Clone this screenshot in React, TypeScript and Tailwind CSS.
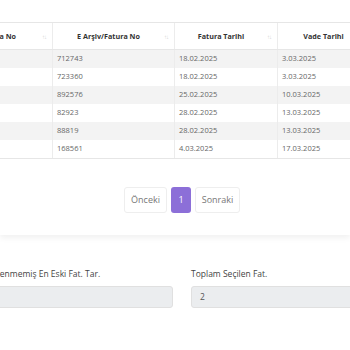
const rows = [
  ["712743", "18.02.2025", "3.03.2025"],
  ["723360", "18.02.2025", "3.03.2025"],
  ["892576", "25.02.2025", "10.03.2025"],
  ["82923", "28.02.2025", "13.03.2025"],
  ["88819", "28.02.2025", "13.03.2025"],
  ["168561", "4.03.2025", "17.03.2025"],
];

const widths = ["w-[99px]", "w-[122px]", "w-[103px]", "w-[102px]"];
const titles = ["Fatura No", "E Arşiv/Fatura No", "Fatura Tarihi", "Vade Tarihi"];

function SortIcon() {
  return <span className="absolute right-[6px] top-[11px] text-[6px] leading-none tracking-[-1px] text-[#d4d4d4]">↑↓</span>;
}

export default function App() {
  return (
    <div className="w-[350px] h-[350px] overflow-hidden bg-white font-['Open_Sans',sans-serif] text-[#555]">
      <div className="pt-[22px] h-[235px] shadow-[0_3px_6px_rgba(0,0,0,0.06)]">
        <div className="-ml-[46px] w-[426px]">
          <div className="flex h-[28px] border-y border-[#e6e6e6]">
            {titles.map((t, i) => (
              <div key={i} className={`${widths[i]} shrink-0 relative flex items-center justify-center pr-[10px] border-r border-[#ececec] text-[7.2px] font-bold text-[#333]`}>
                {t}
                {i < 3 && <SortIcon />}
              </div>
            ))}
          </div>
          {rows.map((r, i) => (
            <div key={i} className={`flex h-[18px] ${i % 2 === 0 ? "bg-[#f3f3f3]" : "bg-white"}`}>
              <div className={`${widths[0]} shrink-0 border-r border-[#ececec]`} />
              {r.map((v, j) => (
                <div key={j} className={`${widths[j + 1]} shrink-0 flex items-center border-r border-[#ececec] px-[4px] text-[7.5px] text-[#666]`}>
                  {v}
                </div>
              ))}
            </div>
          ))}
          <div className="border-t border-[#e6e6e6]" />
        </div>
        <div className="mt-[28px] ml-[124px] flex items-center gap-[4px] text-[9px]">
          <button className="h-[26px] w-[43px] rounded-[3px] border border-[#eeeeee] text-[#777]">Önceki</button>
          <button className="h-[26px] w-[20px] rounded-[3px] bg-[#8c6fd8] text-white">1</button>
          <button className="h-[26px] w-[45px] rounded-[3px] border border-[#eeeeee] text-[#777]">Sonraki</button>
        </div>
      </div>
      <div className="mt-[31px] -ml-[12px] flex gap-[18px] text-[8.5px] text-[#444]">
        <div className="w-[185px] shrink-0 flex flex-col">
          <label className="h-[16px] leading-[16px]">Ödenmemiş En Eski Fat. Tar.</label>
          <div className="mt-[4px] h-[22px] rounded-[3px] border border-[#e0e0e0] bg-[#ebedef]" />
        </div>
        <div className="w-[185px] shrink-0 flex flex-col">
          <label className="h-[16px] leading-[16px]">Toplam Seçilen Fat.</label>
          <div className="mt-[4px] h-[22px] rounded-[3px] border border-[#e0e0e0] bg-[#ebedef] pl-[8px] leading-[20px] text-[#555]">2</div>
        </div>
      </div>
    </div>
  );
}
